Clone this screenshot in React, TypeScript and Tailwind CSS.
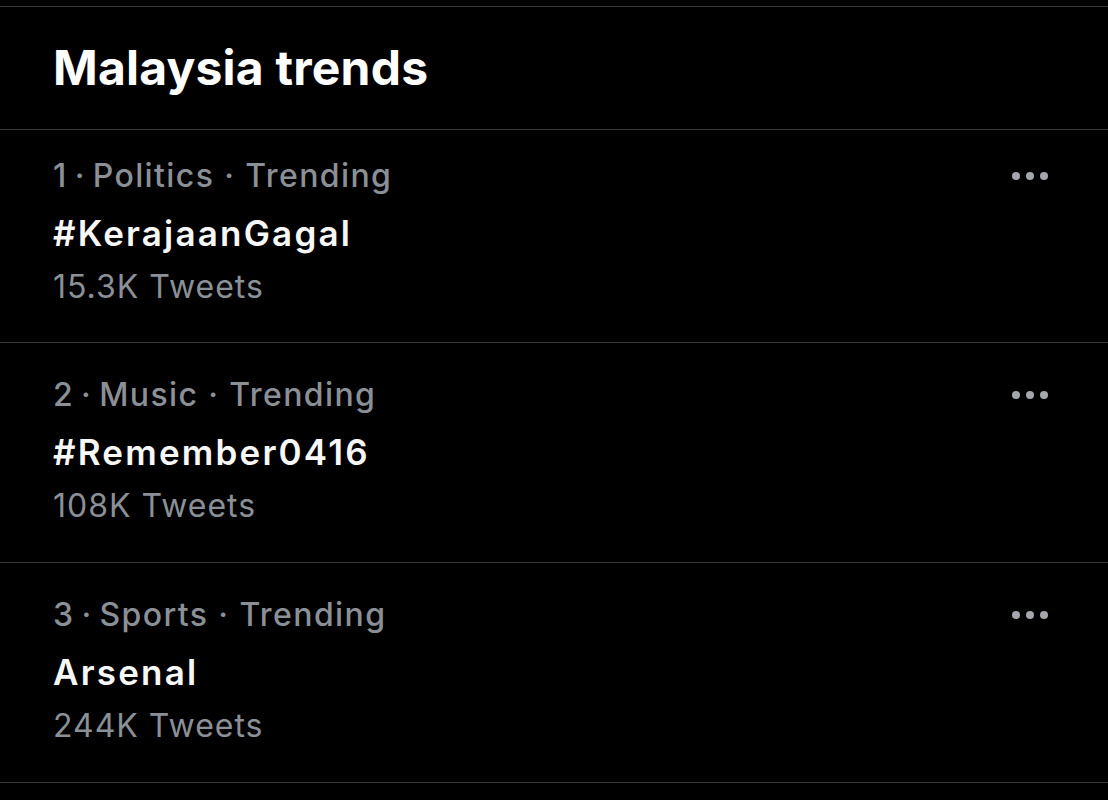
const trends = [
    { rank: 1, category: 'Politics', name: '#KerajaanGagal', count: '15.3K Tweets' },
    { rank: 2, category: 'Music', name: '#Remember0416', count: '108K Tweets' },
    { rank: 3, category: 'Sports', name: 'Arsenal', count: '244K Tweets' },
];

const Dots = () => (
    <div className="flex items-center gap-[6px]">
        <span className="w-[8px] h-[8px] rounded-full bg-[#a3a7ac]" />
        <span className="w-[8px] h-[8px] rounded-full bg-[#a3a7ac]" />
        <span className="w-[8px] h-[8px] rounded-full bg-[#a3a7ac]" />
    </div>
);

const TrendRow = ({ trend, first }: { trend: (typeof trends)[number]; first: boolean }) => (
    <div
        className={`flex justify-between border-b border-[#3a3a3c] pl-[53px] pr-[60px] ${
            first ? 'h-[213px] pt-[26px]' : 'h-[220px] pt-[32px]'
        }`}
    >
        <div className="flex flex-col">
            <div className="text-[32px] leading-[40px] font-medium tracking-[1.4px] text-[#8b9097]">
                {trend.rank}
                {'\u2009·\u2009'}
                {trend.category} · Trending
            </div>
            <div className="mt-[15px] text-[35px] leading-[44px] font-semibold tracking-[2.2px] text-[#f7f7f7]">
                {trend.name}
            </div>
            <div className="mt-[12px] text-[32px] leading-[40px] tracking-[1px] text-[#8b9097]">
                {trend.count}
            </div>
        </div>
        <div className="pt-[16px]">
            <Dots />
        </div>
    </div>
);

export default function App() {
    return (
        <div
            className="w-[1108px] h-[800px] bg-black pt-[6px] overflow-hidden"
            style={{ fontFamily: 'Inter, "Noto Sans", sans-serif' }}
        >
            <div className="h-[124px] flex items-center border-y border-[#3a3a3c] pl-[53px]">
                <h1 className="text-[48px] leading-[60px] font-bold text-white tracking-[0.2px]">
                    Malaysia trends
                </h1>
            </div>
            {trends.map((trend, i) => (
                <TrendRow key={trend.rank} trend={trend} first={i === 0} />
            ))}
        </div>
    );
}
